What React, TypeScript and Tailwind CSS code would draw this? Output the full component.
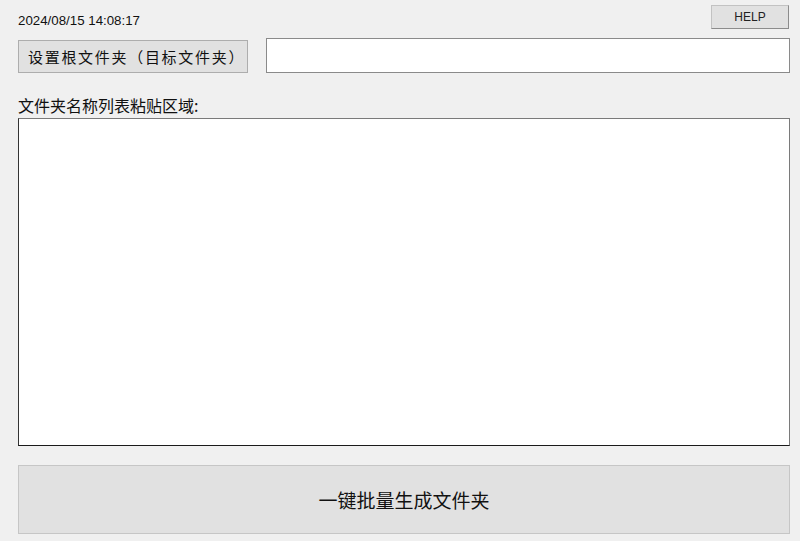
const App = () => {
  return (
    <div className="w-[800px] h-[541px] bg-[#f0f0f0] pl-[18px] pr-[10px] flex flex-col font-['Noto_Sans_CJK_SC',sans-serif] text-black overflow-hidden">
      {/* top bar */}
      <div className="flex items-end justify-between pt-[5px]">
        <span className="font-['Liberation_Sans',sans-serif] text-[13.3px] leading-[16px] text-[#111]">
          2024/08/15 14:08:17
        </span>
        <button className="w-[78px] h-[24px] mr-[1px] bg-[#e1e1e1] border border-[#c2c2c2] border-b-[#8c8c8c] border-r-[#8c8c8c] font-['Liberation_Sans',sans-serif] text-[12px] leading-none text-[#222]">
          HELP
        </button>
      </div>

      {/* root folder row */}
      <div className="flex items-start gap-[18px] mt-[9px]">
        <button className="w-[230px] h-[33px] mt-[2px] bg-[#e1e1e1] border border-[#adadad] text-[15px] tracking-[1.7px] leading-none text-[#111] text-left pl-[9px]">
          设置根文件夹（目标文件夹）
        </button>
        <input className="flex-1 h-[35px] bg-white border border-[#8a8a8a] outline-none px-1 text-[14px]" />
      </div>

      {/* paste area */}
      <div className="mt-[21px] text-[16px] leading-[22px] text-[#111]">文件夹名称列表粘贴区域:</div>
      <textarea className="mt-[2px] h-[328px] w-full bg-white border border-[#7a7a7a] border-b-[#1a1a1a] border-l-[#333] resize-none outline-none p-1 text-[14px]" />

      {/* generate */}
      <button className="mt-[19px] h-[69px] w-full bg-[#e1e1e1] border border-[#c6c6c6] text-[19px] leading-none text-[#111]">
        一键批量生成文件夹
      </button>
    </div>
  );
};

export default App;
